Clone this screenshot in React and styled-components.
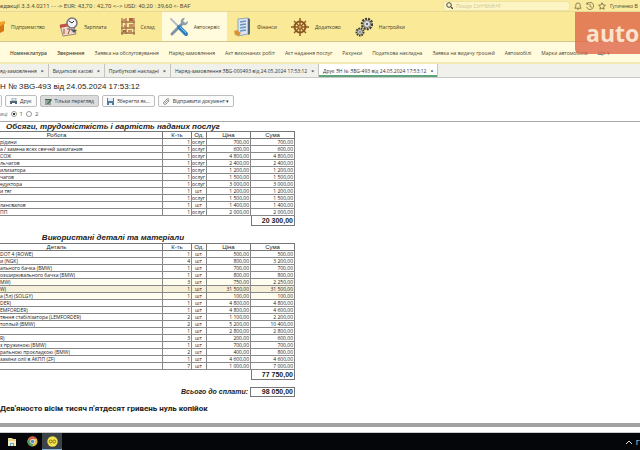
import styled, { createGlobalStyle, css } from "styled-components";

const GlobalStyle = createGlobalStyle`
  * {
    box-sizing: border-box;
  }

  body {
    margin: 0;
    background: #fff;
    color: #333;
    font: 5px/8px "Open Sans", "Liberation Sans", sans-serif;
    overflow: hidden;
  }

  button,
  input {
    font: inherit;
    color: inherit;
  }
`;

const Page = styled.div`
  min-height: 100vh;
  display: flex;
  flex-direction: column;
  overflow: hidden;
`;

const TitleBar = styled.header`
  height: 12px;
  display: flex;
  align-items: center;
  justify-content: space-between;
  background: #faeb9e;
  border-bottom: 1px solid #e6d898;
  color: #55503a;
  white-space: nowrap;
`;

const AppTitle = styled.span`
  font-family: Roboto, sans-serif;
  font-size: 6px;
`;

const TitleTools = styled.div`
  width: 197px;
  flex: none;
  display: flex;
  align-items: center;
  gap: 4px;
`;

const UserName = styled.span`
  font-family: "Liberation Sans", Arial, sans-serif;
`;

const SearchBox = styled.label`
  width: 127px;
  height: 10px;
  flex: none;
  display: flex;
  align-items: center;
  gap: 3px;
  padding-left: 2px;
  background: #fdf4c4;
  border: 1px solid #f1e3a4;
  border-radius: 2px;
`;

const SearchInput = styled.input`
  min-width: 0;
  flex: 1;
  height: 8px;
  padding: 0;
  border: 0;
  outline: 0;
  background: none;

  &::placeholder {
    color: #c9bf94;
  }
`;

const IconButton = styled.button`
  flex: none;
  display: flex;
  padding: 0;
  border: 0;
  background: none;
`;

const Nav = styled.nav`
  height: 30px;
  display: flex;
  background: #faea98;
  border-bottom: 1px solid #d3c68c;
`;

const NavItem = styled.a`
  display: flex;
  align-items: center;
  gap: 6px;
  padding: 0 7px;
  flex: none;
  color: #3f3b26;
  text-decoration: none;
  background: ${({ $active }) => ($active ? "#fffbdc" : "none")};

  &:first-child {
    padding-left: 0;
  }
`;

const SubNav = styled.nav`
  height: 22px;
  display: flex;
  align-items: center;
  gap: 10px;
  padding: 2px 0 0 10px;
  background: #fffbdc;
  border-bottom: 2px solid #f3eab4;
  white-space: nowrap;
`;

const SubLink = styled.a`
  color: #4a4636;
  text-decoration: none;
  font-weight: ${({ $bold }) => ($bold ? "600" : "normal")};
`;

const Tabs = styled.div`
  height: 14px;
  display: flex;
  background: #f1f1ec;
  border-bottom: 1px solid #c9c9c5;
  white-space: nowrap;
`;

const Tab = styled.button`
  display: flex;
  align-items: center;
  gap: 4px;
  padding: 0 4px;
  border: 0;
  border-right: 1px solid #c4c4c0;
  background: none;
  color: #333;

  &:first-child {
    padding-left: 0;
  }

  ${({ $active }) =>
    $active &&
    css`
      background: #fff;
      box-shadow: inset 0 -2px #5da47c;
    `}
`;

const DocTitle = styled.h1`
  margin: 0;
  padding: 3px 0 2px;
  font-family: "Liberation Sans", Arial, sans-serif;
  font-size: 8px;
  font-weight: normal;
  line-height: 12px;
  color: #222;
`;

const Toolbar = styled.div`
  display: flex;
  gap: 3px;
`;

const ToolButton = styled.button`
  height: 12px;
  display: flex;
  align-items: center;
  gap: 3px;
  padding: 0 4px;
  border: 1px solid #bdbdbd;
  border-left-width: ${({ $cut }) => ($cut ? 0 : "1px")};
  border-radius: 2px;
  background: ${({ $pressed }) => ($pressed ? "#dcdcdc" : "#fbfbfb")};
  color: #333;
  white-space: nowrap;

  ${({ $cut }) =>
    $cut &&
    css`
      width: 2px;
      padding: 0;
      border-radius: 0 2px 2px 0;
    `}
`;

const PageSwitch = styled.div`
  height: 14px;
  display: flex;
  align-items: center;
  gap: 3px;
  color: #555;
`;

const RadioLabel = styled.label`
  display: flex;
  align-items: center;
  gap: 3px;
  font-size: 6px;
`;

const Radio = styled.input`
  appearance: none;
  width: 6px;
  height: 6px;
  margin: 0;
  border: 1px solid #999;
  border-radius: 50%;
  background: #fff;

  &:checked {
    background: radial-gradient(#333 40%, #fff 50%);
  }
`;

const Sheet = styled.main`
  flex: 1;
  border-top: 1px solid #a9a9a9;
  border-bottom: 4px solid #a2a2a2;
  color: #222;
`;

const Section = styled.section`
  width: 295px;
  margin-bottom: 7px;
`;

const SectionTitle = styled.h2`
  margin: 0;
  padding-right: 69px;
  font-family: "Liberation Sans", Arial, sans-serif;
  font-size: 8px;
  font-style: italic;
  line-height: ${({ $tight }) => ($tight ? "9px" : "10px")};
  text-align: center;
  white-space: nowrap;
  color: #222;
`;

const Table = styled.table`
  width: 100%;
  table-layout: fixed;
  border-spacing: 0;
  line-height: 6px;
`;

const HeadCell = styled.th`
  width: ${({ $width }) => $width || "auto"};
  height: 8px;
  padding: 0;
  border: solid #777;
  border-width: 1px 1px 1px 0;
  font-family: "Liberation Sans", Arial, sans-serif;
  font-size: 6px;
  font-weight: normal;
  color: #222;

  &:first-child {
    padding-right: 49px;
  }
`;

const Cell = styled.td`
  height: 7px;
  padding: 0 1px 0 0;
  border: solid #888;
  border-width: 0 1px 1px 0;
  text-align: ${({ $align }) => $align || "right"};
  white-space: nowrap;
  overflow: hidden;
`;

const Row = styled.tr`
  background: ${({ $tone }) =>
    ({ active: "#f6f0d8", near: "#fffdf0" })[$tone] || "none"};
`;

const TotalGap = styled.td`
  padding: 0 2px 0 0;
  font-family: "Liberation Sans", Arial, sans-serif;
  font-size: 7px;
  font-style: italic;
  font-weight: bold;
  text-align: right;
  color: #222;
`;

const TotalCell = styled.td`
  width: ${({ $width }) => $width || "auto"};
  height: 10px;
  padding: 0 1px 0 0;
  border: solid #777;
  border-width: ${({ $boxed }) => ($boxed ? "1px" : "0 1px 1px")};
  font-family: "Liberation Sans", Arial, sans-serif;
  font-size: 7px;
  font-weight: bold;
  line-height: 8px;
  text-align: right;
  color: #222;
`;

const AmountInWords = styled.p`
  margin: 0;
  font-family: Roboto, sans-serif;
  font-size: 8px;
  font-weight: bold;
  line-height: 10px;
  color: #222;
`;

const ScrollEdge = styled.div`
  height: 6px;
  border-bottom: 1px solid #ccc;
  background: #fff;
`;

const Taskbar = styled.footer`
  height: 17px;
  display: flex;
  align-items: stretch;
  padding-left: 2px;
  background: #04060a;
  color: #ddd;
`;

const TaskButton = styled.button`
  width: 20px;
  display: flex;
  align-items: center;
  justify-content: center;
  padding: 0;
  border: 0;
  background: ${({ $active }) => ($active ? "#3b4349" : "none")};
  box-shadow: ${({ $active }) => ($active ? "inset 0 -1px #7fb2d8" : "none")};
`;

const Tray = styled.div`
  margin-left: auto;
  display: flex;
  align-items: center;
  gap: 4px;
  font-size: 8px;
`;

const Watermark = styled.div`
  position: absolute;
  top: 12px;
  right: 0;
  width: 65px;
  height: 42px;
  padding-left: 11px;
  border-radius: 0 0 0 5px;
  background: rgba(222, 103, 72, 0.8);
  color: #fbe3cf;
  font: bold 23px/42px "Open Sans", sans-serif;
  overflow: hidden;
`;

const BoxIcon = () => (
  <svg width="5" height="18" viewBox="0 0 5 18">
    <path d="M0 4l5-1v3l-5 2z" fill="#f4a12c" />
    <path d="M0 8l4-2v7l-4 2z" fill="#d67712" />
  </svg>
);

const CalendarIcon = () => (
  <svg width="19" height="20" viewBox="0 0 19 20">
    <path d="M1 8l13-2 3 11-13 2z" fill="#e6dccf" stroke="#a2856a" />
    <path d="M1 8l10-2v3L1 11z" fill="#c94e3c" />
    <path d="M5 12v5M8 12h3l-2 5" stroke="#b04435" fill="none" />
    <circle cx="13" cy="6" r="5" fill="#f4f4f4" stroke="#74747a" strokeWidth="1.5" />
    <path d="M10 4l3 2 2-2" stroke="#333" fill="none" />
    <path d="M11 12l4 4 3-3" fill="#55555c" />
  </svg>
);

const ShelfIcon = () => (
  <svg width="14" height="19" viewBox="0 0 14 19">
    <path d="M1 1v17M13 1v17M5 1v16" stroke="#8b6141" />
    <path d="M0 5h14M0 11h14M0 16h14" stroke="#a0704a" strokeWidth="1.5" />
    <path d="M2 2h4v2H2zM8 7h4v3H8zM3 8h3v2H3zM7 13h4v2H7z" fill="#c98d61" />
    <path d="M8 1h4v3H8zM2 13h3v2H2z" fill="#b85f47" />
  </svg>
);

const ToolsIcon = () => (
  <svg width="19" height="20" viewBox="0 0 19 20">
    <path d="M3 17L14 6" stroke="#8395a5" strokeWidth="3" strokeLinecap="round" />
    <path d="M12 6c-1-3 1-5 4-5l-2 3 2 2 3-2c0 3-2 5-5 4z" fill="#8ea0ae" />
    <path d="M2 2l8 8" stroke="#b5bec5" strokeWidth="2" strokeLinecap="round" />
    <path d="M10 10l7 7" stroke="#2e83bf" strokeWidth="4" strokeLinecap="round" />
    <path d="M11 10l6 6" stroke="#83bde2" />
  </svg>
);

const FinanceIcon = () => (
  <svg width="17" height="20" viewBox="0 0 17 20">
    <path d="M4 2l10-1v16l-10 2z" fill="#dce6f0" stroke="#92a5b9" />
    <path d="M14 1l2 1v15l-2 1z" fill="#53677e" />
    <path d="M6 5l6-1M6 8l6-1M6 11l6-1M6 14l6-1" stroke="#6c95c0" strokeWidth="1.5" />
    <path d="M0 14l3-1 4 3-2 3-4-1z" fill="#d9933a" />
  </svg>
);

const HelmIcon = () => (
  <svg width="18" height="20" viewBox="0 0 18 20" fill="none" stroke="#8b5622">
    <path d="M9 1v18M0 10h18M3 4l12 12M15 4L3 16" strokeWidth="1.4" />
    <circle cx="9" cy="10" r="5.5" strokeWidth="2" />
    <circle cx="9" cy="10" r="2" fill="#d49a50" />
  </svg>
);

const GearsIcon = () => (
  <svg width="18" height="20" viewBox="0 0 18 20" fill="none">
    <circle cx="12" cy="7" r="5" stroke="#3d3d3d" strokeWidth="2.5" strokeDasharray="2 1" />
    <circle cx="12" cy="7" r="3.5" fill="#ddd" stroke="#777" />
    <circle cx="12" cy="7" r="1" fill="#444" />
    <circle cx="5" cy="15" r="3.5" stroke="#3d3d3d" strokeWidth="2" strokeDasharray="1.6 .8" />
    <circle cx="5" cy="15" r="2.4" fill="#ddd" stroke="#777" />
    <circle cx="5" cy="15" r=".8" fill="#444" />
  </svg>
);

const SearchIcon = () => (
  <svg width="7" height="7" viewBox="0 0 7 7" fill="none" stroke="#4c4938">
    <circle cx="3" cy="3" r="2.3" />
    <path d="M5 5l2 2" strokeWidth="1.3" />
  </svg>
);

const LineIcon = ({ d }) => (
  <svg width="8" height="8" viewBox="0 0 9 9" fill="none" stroke="#5d573b" strokeWidth=".8">
    <path d={d} />
  </svg>
);

const PrinterIcon = () => (
  <svg width="7" height="7" viewBox="0 0 7 7">
    <path d="M0 3h7v3H0z" fill="#4e6474" />
    <path d="M2 0h4v3H2z" fill="#dce6ec" stroke="#66808f" strokeWidth=".5" />
    <path d="M2 5h3v2H2z" fill="#fff" />
  </svg>
);

const EditIcon = () => (
  <svg width="7" height="7" viewBox="0 0 7 7">
    <path d="M0 1h6v6H0z" fill="#91a59a" />
    <path d="M0 1h6v1H0z" fill="#456050" />
    <path d="M2 6l4-5 1 1-4 4z" fill="#3b5b49" />
  </svg>
);

const DiskIcon = () => (
  <svg width="7" height="7" viewBox="0 0 7 7">
    <path d="M0 0h7v7H0z" fill="#5279a0" />
    <path d="M1 0h5v3H1zM2 5h3v2H2z" fill="#e4edf5" />
  </svg>
);

const ClipIcon = () => (
  <svg width="7" height="7" viewBox="0 0 7 7" fill="none" stroke="#777" strokeWidth=".8">
    <path d="M2 5l3-3a1 1 0 011 1L3 6a1.4 1.4 0 01-2-2l3-3a1.6 1.6 0 012 0" />
  </svg>
);

const FolderIcon = () => (
  <svg width="10" height="10" viewBox="0 0 10 10">
    <path d="M1 1h4l1 1h3v7H1z" fill="#e8d894" />
    <path d="M1 4h8v5H1z" fill="#f3ecc0" />
    <path d="M3 6h4v3H6V7H4v2H3z" fill="#63a9c4" />
  </svg>
);

const ChromeIcon = () => (
  <svg width="11" height="11" viewBox="0 0 11 11">
    <circle cx="5.5" cy="5.5" r="5" fill="#e7bd42" />
    <path d="M1.2 3a5 5 0 018.6 0H5.5l-2 3.6z" fill="#d9594b" />
    <path d="M1.2 3a5 5 0 003.8 7.5l2.4-3.9h-4z" fill="#4c9e63" />
    <circle cx="5.5" cy="5.5" r="2.4" fill="#eee" />
    <circle cx="5.5" cy="5.5" r="1.7" fill="#5788c9" />
  </svg>
);

const OneCIcon = () => (
  <svg width="11" height="11" viewBox="0 0 11 11" fill="none">
    <circle cx="5.5" cy="5.5" r="5.2" fill="#f3e34c" />
    <circle cx="3.7" cy="5.5" r="1.5" stroke="#857522" />
    <circle cx="7.2" cy="5.5" r="1.5" stroke="#857522" />
  </svg>
);

const navItems = [
  { icon: BoxIcon, label: "Підприємство" },
  { icon: CalendarIcon, label: "Зарплата" },
  { icon: ShelfIcon, label: "Склад" },
  { icon: ToolsIcon, label: "Автосервіс", active: true },
  { icon: FinanceIcon, label: "Фінанси" },
  { icon: HelmIcon, label: "Додатково" },
  { icon: GearsIcon, label: "Настройки" },
];

const subLinks = [
  "Номенклатура",
  "Звернення",
  "Заявка на обслуговування",
  "Наряд-замовлення",
  "Акт виконаних робіт",
  "Акт надання послуг",
  "Рахунки",
  "Податкова накладна",
  "Заявка на видачу грошей",
  "Автомобілі",
  "Марки автомобілів",
  "Ще ▾",
];

const tabs = [
  "яд-замовлення",
  "Видаткові касові",
  "Прибуткові накладні",
  "Наряд-замовлення ЗBG-000493 від 24.05.2024 17:53:12",
  "Друк ЗН № ЗBG-493 від 24.05.2024 17:53:12",
];

const works = [
  ["рідини", "1", "ослуг", "700,00", "700,00"],
  ["а / замена всех свечей зажигания", "1", "ослуг", "600,00", "600,00"],
  ["СОЖ", "1", "ослуг", "4 800,00", "4 800,00"],
  ["льчагов", "1", "ослуг", "2 400,00", "2 400,00"],
  ["илизатора", "1", "ослуг", "1 200,00", "1 200,00"],
  ["чагов", "1", "ослуг", "1 500,00", "1 500,00"],
  ["едуктора", "1", "ослуг", "3 000,00", "3 000,00"],
  ["и тяг", "1", "шт", "1 200,00", "1 200,00"],
  ["", "1", "ослуг", "1 500,00", "1 500,00"],
  ["лансвалов", "1", "шт", "1 400,00", "1 400,00"],
  ["ПП", "1", "ослуг", "2 000,00", "2 000,00"],
];

const parts = [
  ["DOT 4 (ROWE)", "1", "шт", "500,00", "500,00"],
  ["и (NGK)", "4", "шт", "800,00", "3 200,00"],
  ["ального бачка (BMW)", "1", "шт", "700,00", "700,00"],
  ["озширювального бачка (BMW)", "1", "шт", "800,00", "800,00"],
  ["MW)", "3", "шт", "750,00", "2 250,00", "near"],
  ["W)", "1", "шт", "31 500,00", "31 500,00", "active"],
  ["а (5л) (SOLGY)", "1", "шт", "100,00", "100,00", "near"],
  ["DER)", "1", "шт", "4 800,00", "4 800,00"],
  ["EMFORDER)", "1", "шт", "4 800,00", "4 600,00"],
  ["тяння стабілізатора (LEMFORDER)", "2", "шт", "1 100,00", "2 200,00"],
  ["топлый (BMW)", "2", "шт", "5 200,00", "10 400,00"],
  ["", "1", "шт", "2 800,00", "2 800,00"],
  ["R)", "3", "шт", "200,00", "600,00"],
  ["з пружиною (BMW)", "1", "шт", "700,00", "700,00"],
  ["ральною прокладкою (BMW)", "2", "шт", "400,00", "800,00"],
  ["заміни олії в АКПП (ZF)", "1", "шт", "4 600,00", "4 600,00"],
  ["", "7", "шт", "1 000,00", "7 000,00"],
];

const InvoiceTable = ({ nameTitle, rows, total }) => (
  <Table>
    <thead>
      <tr>
        <HeadCell>{nameTitle}</HeadCell>
        <HeadCell $width="29px">К-ть</HeadCell>
        <HeadCell $width="15px">Од.</HeadCell>
        <HeadCell $width="44px">Ціна</HeadCell>
        <HeadCell $width="44px">Сума</HeadCell>
      </tr>
    </thead>
    <tbody>
      {rows.map(([name, count, unit, price, sum, tone], i) => (
        <Row key={i} $tone={tone}>
          <Cell $align="left">{name}</Cell>
          <Cell>{count}</Cell>
          <Cell $align="center">{unit}</Cell>
          <Cell>{price}</Cell>
          <Cell>{sum}</Cell>
        </Row>
      ))}
    </tbody>
    <tfoot>
      <tr>
        <TotalGap colSpan={4} />
        <TotalCell>{total}</TotalCell>
      </tr>
    </tfoot>
  </Table>
);

const App = () => (
  <Page>
    <GlobalStyle />
    <TitleBar>
      <AppTitle>едакції 3.3.4.0211 - - -&gt; EUR: 43,70 : 42,70 &lt;--&gt; USD: 40,20 : 39,60 &lt;- BAF</AppTitle>
      <TitleTools>
        <SearchBox>
          <SearchIcon />
          <SearchInput type="search" aria-label="Пошук" placeholder="Пошук Ctrl+Shift+F" />
        </SearchBox>
        <IconButton aria-label="Сповіщення">
          <LineIcon d="M1 7h7L7 5V3.500a2.500 2.500 0 00-5 0V5zM3.500 8h2" />
        </IconButton>
        <IconButton aria-label="Історія">
          <LineIcon d="M1 2.500a4 4 0 11-.3 3M1 .5v2h2M4.500 2v3l2 1" />
        </IconButton>
        <IconButton aria-label="Обране">
          <LineIcon d="M4.500.8l1.100 2.500 2.800.3-2.100 1.900.6 2.700-2.400-1.400-2.400 1.400.6-2.700L.6 3.600l2.800-.3z" />
        </IconButton>
        <UserName>Гутиченко В</UserName>
      </TitleTools>
    </TitleBar>

    <Nav>
      {navItems.map(({ icon: Icon, label, active }) => (
        <NavItem key={label} href="#" $active={active}>
          <Icon />
          {label}
        </NavItem>
      ))}
    </Nav>

    <SubNav>
      {subLinks.map((label, i) => (
        <SubLink key={label} href="#" $bold={i < 2}>
          {label}
        </SubLink>
      ))}
    </SubNav>

    <Tabs>
      {tabs.map((label, i) => (
        <Tab key={label} $active={i === tabs.length - 1}>
          <span>{label}</span>
          <b>×</b>
        </Tab>
      ))}
    </Tabs>

    <DocTitle>Н № ЗBG-493 від 24.05.2024 17:53:12</DocTitle>

    <Toolbar>
      <ToolButton $cut aria-label="Назад" />
      <ToolButton>
        <PrinterIcon />
        Друк
      </ToolButton>
      <ToolButton $pressed>
        <EditIcon />
        Тільки перегляд
      </ToolButton>
      <ToolButton>
        <DiskIcon />
        Зберегти як...
      </ToolButton>
      <ToolButton>
        <ClipIcon />
        Відправити документ ▾
      </ToolButton>
    </Toolbar>

    <PageSwitch>
      <span>иці</span>
      <RadioLabel>
        <Radio type="radio" name="page" defaultChecked />1
      </RadioLabel>
      <RadioLabel>
        <Radio type="radio" name="page" />2
      </RadioLabel>
    </PageSwitch>

    <Sheet>
      <Section>
        <SectionTitle $tight>Обсяги, трудомісткість і вартість наданих послуг</SectionTitle>
        <InvoiceTable nameTitle="Робота" rows={works} total="20 300,00" />
      </Section>
      <Section>
        <SectionTitle>Використані деталі та матеріали</SectionTitle>
        <InvoiceTable nameTitle="Деталь" rows={parts} total="77 750,00" />
      </Section>
      <Section>
        <Table>
          <tbody>
            <tr>
              <TotalGap>Всього до сплати:</TotalGap>
              <TotalCell $boxed $width="45px">98 050,00</TotalCell>
            </tr>
          </tbody>
        </Table>
      </Section>
      <AmountInWords>Дев'яносто вісім тисяч п'ятдесят гривень нуль копійок</AmountInWords>
    </Sheet>
    <ScrollEdge />

    <Taskbar>
      <TaskButton aria-label="Провідник">
        <FolderIcon />
      </TaskButton>
      <TaskButton aria-label="Chrome">
        <ChromeIcon />
      </TaskButton>
      <TaskButton $active aria-label="1C">
        <OneCIcon />
      </TaskButton>
      <Tray>
        <svg width="6" height="4" viewBox="0 0 6 4" fill="none" stroke="#ddd">
          <path d="M0 4l3-3 3 3" />
        </svg>
        <span>Г</span>
      </Tray>
    </Taskbar>

    <Watermark>auto</Watermark>
  </Page>
);

export default App;
